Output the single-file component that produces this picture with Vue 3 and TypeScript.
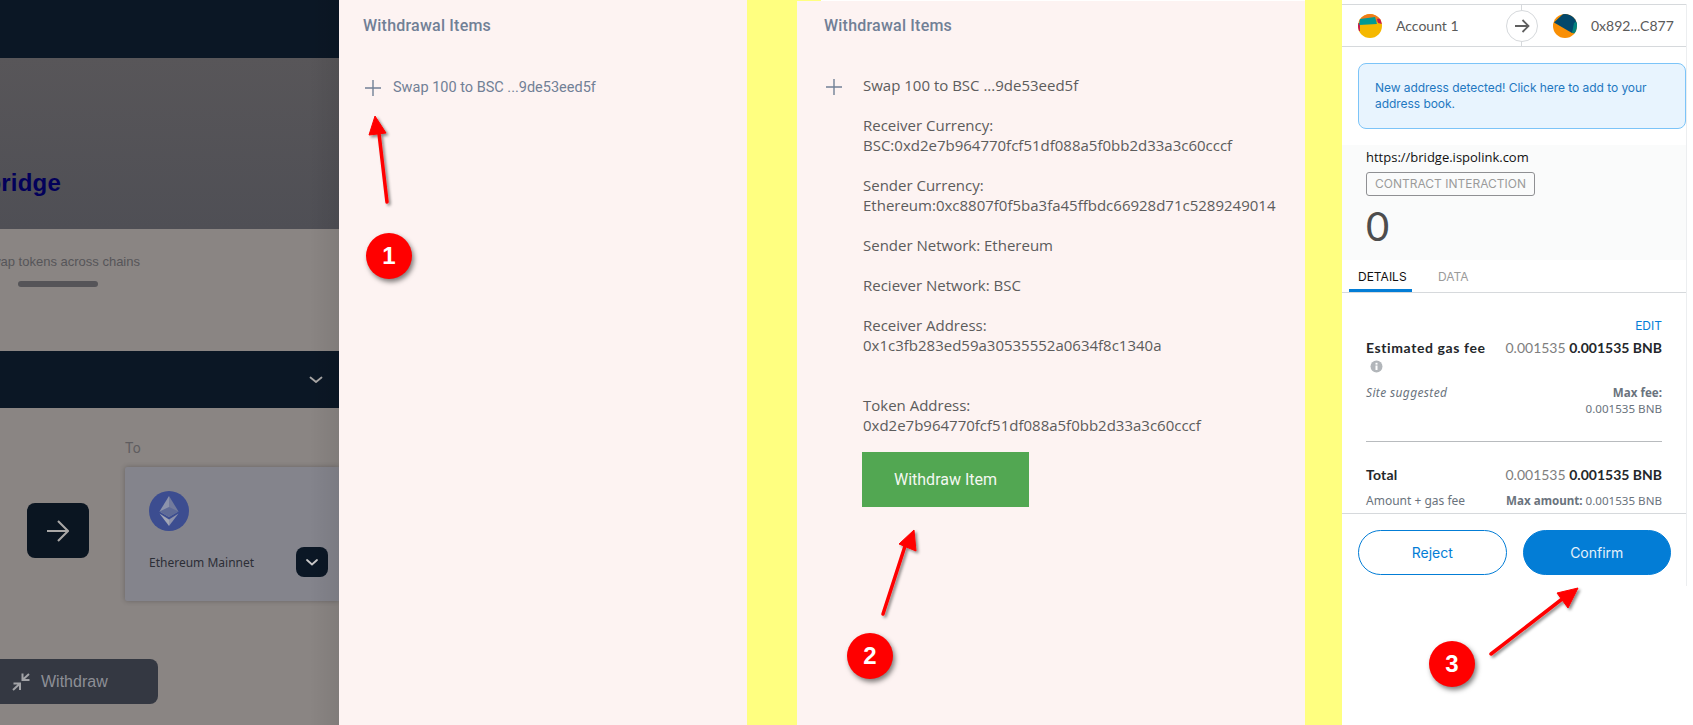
<script setup lang="ts">
interface Field { label?: string; value: string; gap?: boolean }
const fields: Field[] = [
  { label: 'Receiver Currency:', value: 'BSC:0xd2e7b964770fcf51df088a5f0bb2d33a3c60cccf' },
  { label: 'Sender Currency:', value: 'Ethereum:0xc8807f0f5ba3fa45ffbdc66928d71c5289249014' },
  { value: 'Sender Network: Ethereum' },
  { value: 'Reciever Network: BSC' },
  { label: 'Receiver Address:', value: '0x1c3fb283ed59a30535552a0634f8c1340a', gap: true },
  { label: 'Token Address:', value: '0xd2e7b964770fcf51df088a5f0bb2d33a3c60cccf' },
]
</script>

<template>
  <div class="page">
    <!-- dimmed bridge page -->
    <section class="bridge">
      <div class="b-nav"></div>
      <div class="b-hero"><h1>bridge</h1></div>
      <div class="b-sub">
        <p>Swap tokens across chains</p>
        <div class="b-rule"></div>
      </div>
      <div class="b-bar">
        <svg width="14" height="8" viewBox="0 0 14 8"><path d="M1.5 1.5 7 6l5.5-4.5" fill="none" stroke="#a9a7a6" stroke-width="1.8" stroke-linecap="round" stroke-linejoin="round"/></svg>
      </div>
      <div class="b-body">
        <div class="b-row">
          <div class="b-swap">
            <svg width="22" height="22" viewBox="0 0 22 22"><path d="M0 11h20.500M11 1l10 10-10 10" fill="none" stroke="#a9a7a6" stroke-width="2.1"/></svg>
          </div>
          <div class="b-to">
            <span class="b-to-label">To</span>
            <div class="b-card">
              <svg class="eth" width="40" height="40" viewBox="0 0 40 40">
                <circle cx="20" cy="20" r="20" fill="#3c4d90"/>
                <path d="M20 5 10.500 20.500 20 26z" fill="#8c93ab"/>
                <path d="M20 5 29.500 20.500 20 26z" fill="#737b9c"/>
                <path d="M10.500 20.500 20 16 29.500 20.500 20 26z" fill="#5f6b97"/>
                <path d="M10.500 22.500 20 35V28.500z" fill="#a2a6b5"/>
                <path d="M29.500 22.500 20 35V28.500z" fill="#8d92ab"/>
              </svg>
              <div class="b-card-foot">
                <span>Ethereum Mainnet</span>
                <i class="b-mini">
                  <svg width="12" height="7" viewBox="0 0 12 7"><path d="M1 1l5 4.500L11 1" fill="none" stroke="#c9c8c8" stroke-width="1.800" stroke-linecap="round" stroke-linejoin="round"/></svg>
                </i>
              </div>
            </div>
          </div>
        </div>
        <div class="b-withdraw">
          <svg width="18" height="18" viewBox="0 0 18 18"><path d="M1 17l6.500-6M1.500 10.500H8v6.500M17 1l-6 5.500M10.500 0.500v6.500H17.500" fill="none" stroke="#a2a3a7" stroke-width="2"/></svg>
          <span>Withdraw</span>
        </div>
      </div>
    </section>

    <!-- step 1 -->
    <section class="panel p1">
      <h2>Withdrawal Items</h2>
      <div class="item">
        <svg class="plus" width="16" height="16" viewBox="0 0 16 16"><path d="M8 0v16M0 8h16" stroke="#718096" stroke-width="1.400"/></svg>
        <span>Swap 100 to BSC ...9de53eed5f</span>
      </div>
    </section>

    <div class="gutter g1"></div>

    <!-- step 2 -->
    <section class="panel p2">
      <h2>Withdrawal Items</h2>
      <div class="item">
        <svg class="plus" width="16" height="16" viewBox="0 0 16 16"><path d="M8 0v16M0 8h16" stroke="#718096" stroke-width="1.400"/></svg>
        <span>Swap 100 to BSC ...9de53eed5f</span>
      </div>
      <div class="details">
        <p v-for="f in fields" :key="f.value" :class="{ wide: f.gap }">
          <template v-if="f.label">{{ f.label }}<br /></template>{{ f.value }}
        </p>
        <button class="withdraw-item">Withdraw Item</button>
      </div>
    </section>

    <div class="gutter g2"></div>

    <!-- step 3 -->
    <section class="mm-wrap">
      <div class="mm">
        <div class="mm-accounts">
          <div class="acct">
            <svg width="24" height="24" viewBox="0 0 24 24">
              <clipPath id="c1"><circle cx="12" cy="12" r="12"/></clipPath>
              <g clip-path="url(#c1)">
                <rect width="24" height="24" fill="#f5b800"/>
                <rect width="24" height="8" fill="#f07c1a"/>
                <path d="M19 5l5-1v6l-4-1zM0 9h2v8H0z" fill="#c8194f"/>
                <path d="M2 5 17 3l2 7-18 1z" fill="#029a94"/>
              </g>
            </svg>
            <span>Account 1</span>
          </div>
          <div class="hop">
            <svg width="16" height="14" viewBox="0 0 16 14"><path d="M1 7h13M8.500 1 14.500 7l-6 6" fill="none" stroke="#5f5f5f" stroke-width="1.800"/></svg>
          </div>
          <div class="acct to">
            <svg width="24" height="24" viewBox="0 0 24 24">
              <clipPath id="c2"><circle cx="12" cy="12" r="12"/></clipPath>
              <g clip-path="url(#c2)">
                <rect width="24" height="24" fill="#f98f05"/>
                <path d="M1 8.500 10 0h14v11l-5 8z" fill="#03486b"/>
                <path d="M21 9l3-2v13l-5-1z" fill="#03817e"/>
              </g>
            </svg>
            <span>0x892...C877</span>
          </div>
        </div>
        <div class="mm-alert">New address detected! Click here to add to your address book.</div>
        <div class="mm-summary">
          <div class="origin">https://bridge.ispolink.com</div>
          <div class="tag">CONTRACT INTERACTION</div>
          <div class="zero">0</div>
        </div>
        <div class="tabs">
          <span class="tab active">DETAILS</span>
          <span class="tab">DATA</span>
        </div>
        <div class="fees">
          <a class="edit">EDIT</a>
          <div class="line">
            <b class="name">Estimated gas fee</b>
            <span class="amt">0.001535 <b>0.001535 BNB</b></span>
          </div>
          <svg class="info" width="13" height="13" viewBox="0 0 13 13"><circle cx="6.500" cy="6.500" r="6" fill="#b2b6ba"/><rect x="5.500" y="5.500" width="2" height="4.500" fill="#fff"/><rect x="5.500" y="2.800" width="2" height="1.800" fill="#fff"/></svg>
          <div class="line sub first">
            <em>Site suggested</em>
            <span class="right"><b>Max fee:</b><br />0.001535 BNB</span>
          </div>
          <hr />
          <div class="line">
            <b class="name total">Total</b>
            <span class="amt">0.001535 <b>0.001535 BNB</b></span>
          </div>
          <div class="line sub">
            <span>Amount + gas fee</span>
            <span class="right"><b>Max amount:</b> 0.001535 BNB</span>
          </div>
        </div>
        <div class="actions">
          <button class="reject">Reject</button>
          <button class="confirm">Confirm</button>
        </div>
      </div>
    </section>

    <!-- annotations -->
    <svg class="arrows" width="1693" height="725" viewBox="0 0 1693 725">
      <defs>
        <filter id="sh" x="-30%" y="-30%" width="160%" height="160%">
          <feDropShadow dx="2" dy="2" stdDeviation="1.500" flood-color="#000" flood-opacity="0.45"/>
        </filter>
      </defs>
      <g fill="#f00" stroke="#f00" stroke-linejoin="round" filter="url(#sh)">
        <path d="M387 202 378 125" stroke-width="3.500" stroke-linecap="round"/>
        <path d="M375 116 369 135 386 133z" stroke-width="1"/>
        <path d="M883 614 907 540" stroke-width="3.500" stroke-linecap="round"/>
        <path d="M914 530 899 544 916 551z" stroke-width="1"/>
        <path d="M1491 654 1566 596" stroke-width="3.500" stroke-linecap="round"/>
        <path d="M1578 588 1557 593 1568 608z" stroke-width="1"/>
      </g>
    </svg>
    <div class="badge b1">1</div>
    <div class="badge b2">2</div>
    <div class="badge b3">3</div>
  </div>
</template>

<style>
html, body { margin: 0; background: #fff; }
</style>

<style scoped>
.page {
  position: relative;
  display: grid;
  grid-template-columns: 339px 408px 50px 508px 37px 351px;
  width: 1693px;
  height: 725px;
  overflow: hidden;
  font-family: "Noto Sans", sans-serif;
}

/* dimmed page */
.bridge { position: relative; display: flex; flex-direction: column; background: #8a8583; overflow: hidden; }
.bridge::after { content: ""; position: absolute; inset: 0 0 0 auto; width: 30px; background: linear-gradient(90deg, rgba(0,0,0,0), rgba(0,0,0,.07)); }
.b-nav { height: 58px; background: #0b1725; }
.b-hero { height: 171px; box-sizing: border-box; display: flex; justify-content: flex-end; align-items: flex-end; padding: 0 278px 32px 0; background: linear-gradient(180deg, #585659, #4f4f55); }
.b-hero h1 { margin: 0; font: bold 24px/28px "Liberation Sans", sans-serif; letter-spacing: .2px; color: #02005a; }
.b-sub { height: 122px; box-sizing: border-box; padding-top: 25px; }
.b-sub p { display: flex; justify-content: flex-end; margin: 0; padding-right: 199px; white-space: nowrap; font: 13px/16px "Liberation Sans", sans-serif; color: #565559; }
.b-rule { width: 80px; height: 6px; margin: 11px 0 0 18px; border-radius: 3px; background: #555458; }
.b-bar { height: 57px; box-sizing: border-box; display: flex; align-items: center; justify-content: flex-end; padding-right: 16px; background: #0b1725; }
.b-body { flex: 1; display: flex; flex-direction: column; padding-top: 32px; }
.b-row { display: flex; align-items: flex-start; padding-left: 27px; }
.b-swap { width: 62px; height: 55px; margin: 63px 36px 0 0; display: flex; align-items: center; justify-content: center; border-radius: 8px; background: #0a1521; }
.b-to { flex: 1; }
.b-to-label { display: block; font: 14px/16px "Roboto", sans-serif; color: #5f5d60; margin-bottom: 11px; }
.b-card { height: 134px; box-sizing: border-box; padding: 24px 11px 0 24px; border-radius: 2px 0 0 2px; background: #84848c; box-shadow: 0 0 5px rgba(0,0,0,.25); }
.eth { display: block; }
.b-card-foot { display: flex; align-items: center; justify-content: space-between; margin-top: 16px; font-size: 12px; color: #2c2e36; }
.b-mini { width: 32px; height: 30px; display: flex; align-items: center; justify-content: center; border-radius: 8px; background: #0b1725; }
.b-withdraw { width: 158px; height: 45px; margin-top: 58px; box-sizing: border-box; padding-left: 12px; display: flex; align-items: center; gap: 11px; border-radius: 0 8px 8px 0; background: #343842; font: 16px "Liberation Sans", sans-serif; color: #8d8f96; }

/* accordion panels */
.panel { background: #fdf3f2; font-family: "Roboto", sans-serif; color: #718096; }
.panel h2 { margin: 0; font: 500 16px/20px "Roboto", sans-serif; letter-spacing: .22px; color: #718096; }
.p1 { padding: 16px 0 0 24px; }
.p2 { position: relative; padding: 15px 0 0 27px; border-top: 1px solid #fff; }
.p2::before { content: ""; position: absolute; left: 0; top: -1px; width: 24px; height: 1px; background: #ffff80; }
.gutter { background: #ffff80; }
.item { display: flex; align-items: center; gap: 12px; margin-top: 42px; font-size: 14.5px; line-height: 20px; }
.p1 .item { padding-left: 2px; }
.p2 .item { align-items: flex-start; padding: 0 0 2px 2px; margin-top: 39px; gap: 21px; font: 15px/20px "Open Sans", sans-serif; color: #5c5c5c; }
.plus { flex: none; }
.p2 .plus { margin-top: 4px; }
.details { padding: 18px 0 0 39px; font: 15px/20px "Open Sans", sans-serif; color: #5c5c5c; }
.details p { margin: 0 0 20px; }
.details p.wide { margin-bottom: 40px; }
.details p:last-of-type { margin-bottom: 17px; }
.withdraw-item { display: block; width: 167px; height: 55px; margin-left: -1px; padding: 0; border: 0; background: #52a752; color: #f4f7f1; font: 16px "Roboto", sans-serif; }

/* wallet */
.mm-wrap { padding-top: 4px; background: #fff; }
.mm { width: 345px; height: 582px; box-sizing: border-box; border-right: 1px solid #eceef0; display: flex; flex-direction: column; font-family: "Lato", sans-serif; }
.mm-accounts { position: relative; height: 43px; box-sizing: border-box; display: flex; align-items: center; padding-left: 16px; border-top: 1px solid #d6d9dc; border-bottom: 1px solid #d6d9dc; font-size: 14px; color: #5a5a5a; }
.mm-accounts::before { content: ""; position: absolute; left: 179px; top: 0; bottom: 0; width: 1px; background: #d6d9dc; }
.acct { display: flex; align-items: center; gap: 14px; width: 156px; }
.acct.to { width: auto; }
.hop { position: relative; z-index: 1; width: 32px; height: 32px; flex: none; box-sizing: border-box; margin: 0 15px 0 -8px; display: flex; align-items: center; justify-content: center; border: 1px solid #d6d9dc; border-radius: 50%; background: #fff; }
.mm-alert { height: 66px; box-sizing: border-box; margin: 16px 0 16px 16px; padding: 16px 12px 0 16px; border: 1px solid #7cc4f8; border-radius: 8px; background: #e8f4fe; font: 12px/16px "Inter", sans-serif; letter-spacing: -.05px; color: #1f78c1; }
.mm-summary { height: 115px; box-sizing: border-box; padding: 3px 24px 0; background: #fafbfb; }
.origin { font: 13px/18px "Open Sans", sans-serif; color: #111; }
.tag { width: fit-content; box-sizing: border-box; height: 24px; margin-top: 6px; padding: 0 8px; border: 1px solid #8f9093; border-radius: 3px; font: 12px/22px "Inter", sans-serif; color: #9b9b9b; }
.zero { font: 40px/44px "Lato", sans-serif; margin-top: 8px; color: #4d4d4d; }
.tabs { height: 33px; box-sizing: border-box; display: flex; gap: 17px; padding-left: 7px; border-bottom: 1px solid #d6d9dc; font: 12px "Inter", sans-serif; }
.tab { padding: 9px 9px 0; color: #9b9b9b; }
.tab.active { width: 63px; box-sizing: border-box; height: 32px; padding-right: 0; color: #111; border-bottom: 3px solid #037dd6; }
.fees { flex: 1; min-height: 0; box-sizing: border-box; padding: 26px 24px 0; overflow: hidden; font-size: 14px; color: #6a6a6a; }
.edit { display: block; margin-bottom: 6px; text-align: right; font: 12px/14px "Inter", sans-serif; color: #037dd6; }
.line { display: flex; justify-content: space-between; align-items: flex-start; line-height: 18px; }
.name { color: #24272a; font-weight: 700; letter-spacing: .6px; }
.name.total { letter-spacing: .2px; }
.amt { color: #7e7e7e; }
.amt b { color: #24272a; }
.info { display: block; margin: 3px 0 0 4px; }
.sub { margin-top: 9px; font: 12px/16px "Noto Sans", sans-serif; color: #6a737d; }
.sub em { letter-spacing: .35px; }
.sub.first { margin-top: 12px; }
.right { text-align: right; font-size: 11.6px; }
hr { margin: 24px 0; border: 0; border-top: 1px solid #b8bbbe; }
.actions { height: 73px; flex: none; box-sizing: border-box; display: flex; gap: 16px; padding: 16px 15px 11px 16px; border-top: 1px solid #d6d9dc; }
.actions button { flex: 1; height: 45px; padding: 0; border-radius: 23px; font: 14px "Inter", sans-serif; }
.reject { border: 1px solid #037dd6; background: #fff; color: #037dd6; }
.confirm { border: 1px solid #037dd6; background: #037dd6; color: #e4f1fb; }

/* annotations */
.arrows { position: absolute; left: 0; top: 0; pointer-events: none; }
.badge { position: absolute; width: 46px; height: 46px; border-radius: 50%; background: #f00; color: #fff; font: bold 24px/46px "Liberation Sans", sans-serif; text-align: center; box-shadow: 2px 3px 5px rgba(0,0,0,.5); }
.b1 { left: 366px; top: 233px; }
.b2 { left: 847px; top: 633px; }
.b3 { left: 1429px; top: 641px; }
</style>
